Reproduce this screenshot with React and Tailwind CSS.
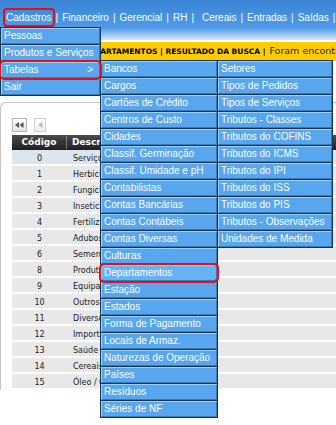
import { Fragment } from "react";

function classNames(...classes) {
  return classes.filter(Boolean).join(" ");
}

const level1 = ["Pessoas", "Produtos e Serviços", "Tabelas", "Sair"];

const level2 = [
  "Bancos",
  "Cargos",
  "Cartões de Crédito",
  "Centros de Custo",
  "Cidades",
  "Classif. Germinação",
  "Classif. Umidade e pH",
  "Contabilistas",
  "Contas Bancárias",
  "Contas Contábeis",
  "Contas Diversas",
  "Culturas",
  "Departamentos",
  "Estação",
  "Estados",
  "Forma de Pagamento",
  "Locais de Armaz.",
  "Naturezas de Operação",
  "Países",
  "Resíduos",
  "Séries de NF",
];

const level3 = [
  "Setores",
  "Tipos de Pedidos",
  "Tipos de Serviços",
  "Tributos - Classes",
  "Tributos do COFINS",
  "Tributos do ICMS",
  "Tributos do IPI",
  "Tributos do ISS",
  "Tributos do PIS",
  "Tributos - Observações",
  "Unidades de Medida",
];

const rows = [
  [0, "Serviços"],
  [1, "Herbicidas"],
  [2, "Fungicidas"],
  [3, "Inseticidas"],
  [4, "Fertilizantes"],
  [5, "Adubos"],
  [6, "Sementes"],
  [8, "Produtos"],
  [9, "Equipamentos"],
  [10, "Outros"],
  [11, "Diversos"],
  [12, "Importados"],
  [13, "Saúde"],
  [14, "Cereais"],
  [15, "Óleo / Combustível"],
];

const nav = ["Financeiro", "Gerencial", "RH", "Cereais", "Entradas", "Saídas"];

function Menu({ items, className, marked, hovered, arrow }) {
  return (
    <div className={classNames("absolute flex flex-col gap-px bg-[#1c334d] p-px", className)}>
      {items.map((label) => (
        <div
          key={label}
          className={classNames(
            "flex h-[16px] items-center justify-between whitespace-nowrap border border-t-[#9ad0fa] border-l-[#9ad0fa] border-r-[#3a78b6] border-b-[#3a78b6] pl-[2px] pr-[6px] text-[10px] leading-none text-white",
            label === hovered ? "bg-[#66b3f4]" : "bg-[#58a6ee]",
            label === marked && "relative z-10 rounded-[3px] outline-2 outline-[#e3101a]"
          )}
        >
          <span>{label}</span>
          {label === arrow && <span>&gt;</span>}
        </div>
      ))}
    </div>
  );
}

export default function App() {
  return (
    <div className="relative h-[425px] w-[336px] overflow-hidden bg-white font-['Liberation_Sans',Arial,sans-serif]">
      {/* top navigation */}
      <div className="h-[40px] bg-linear-to-b from-[#3a83d5] via-[#4f9be8] via-70% to-[#d6e8f9] pl-[3px] pt-[8px]">
        <div className="flex items-center gap-[4px] whitespace-nowrap text-[10px] text-white">
          <span className="mr-[-3px] rounded-[4px] border-2 border-[#e3101a] px-[1px] leading-[15px]">
            Cadastros
          </span>
          {nav.map((item) => (
            <Fragment key={item}>
              <span>|</span>
              <span className={item === "Cereais" ? "ml-[4px]" : ""}>{item}</span>
            </Fragment>
          ))}
          <span>|</span>
        </div>
      </div>

      {/* breadcrumb */}
      <div className="mt-[2px] flex h-[19px] items-center whitespace-nowrap bg-[#ffcc00] pl-[84px] font-['DejaVu_Sans',Verdana,sans-serif]">
        <span className="text-[7.5px] font-bold text-black">DEPARTAMENTOS | RESULTADO DA BUSCA |</span>
        <span className="ml-[4px] text-[9.5px] text-[#222]">Foram encontrados 15 registros</span>
      </div>

      {/* result panel */}
      <div className="mt-[41px] rounded-tl-[6px] border-t border-l border-[#c4c4c4] pl-[11px] pt-[15px] font-['DejaVu_Sans',Verdana,sans-serif]">
        <div className="flex gap-[7px]">
          <div className="flex h-[14px] w-[15px] items-center justify-center border border-[#b5b5b5] bg-linear-to-b from-white to-[#e4e4e4]">
            <svg width="9" height="6" viewBox="0 0 9 6">
              <path d="M0 3 L4 0 L4 6 Z M4.5 3 L8.5 0 L8.5 6 Z" fill="#555" />
            </svg>
          </div>
          <div className="flex h-[14px] w-[12px] items-center justify-center border border-[#d0d0d0] bg-linear-to-b from-white to-[#eeeeee]">
            <svg width="5" height="6" viewBox="0 0 5 6">
              <path d="M0 3 L4.5 0 L4.5 6 Z" fill="#bcbcbc" />
            </svg>
          </div>
        </div>

        <div className="mt-[3px] w-[340px]">
          <div className="flex h-[15px] items-center bg-linear-to-b from-[#4d4d4d] to-[#1f1f1f] text-[9px] font-bold text-white">
            <div className="w-[55px] border-r border-[#7a7a7a] text-center">Código</div>
            <div className="pl-[5px]">Descrição</div>
          </div>
          {rows.map(([code, desc], i) => (
            <div
              key={code}
              className={classNames(
                "flex h-[16px] shrink-0 items-center border-b-2 border-white pt-[3px] text-[8px] leading-none text-[#222]",
                i === 0 ? "bg-[#dde5ee]" : "bg-[#e8e8e8]"
              )}
            >
              <div className="w-[55px] text-center">{code}</div>
              <div className="pl-[6px]">{desc}</div>
            </div>
          ))}
        </div>
      </div>

      {/* open dropdown menus */}
      <Menu items={level1} className="left-0 top-[27px] z-20 w-[101px]" marked="Tabelas" arrow="Tabelas" />
      <Menu items={level2} className="left-[100px] top-[60px] z-10 w-[118px]" marked="Departamentos" hovered="Departamentos" />
      <Menu items={level3} className="left-[217px] top-[60px] z-10 w-[116px]" />
    </div>
  );
}
